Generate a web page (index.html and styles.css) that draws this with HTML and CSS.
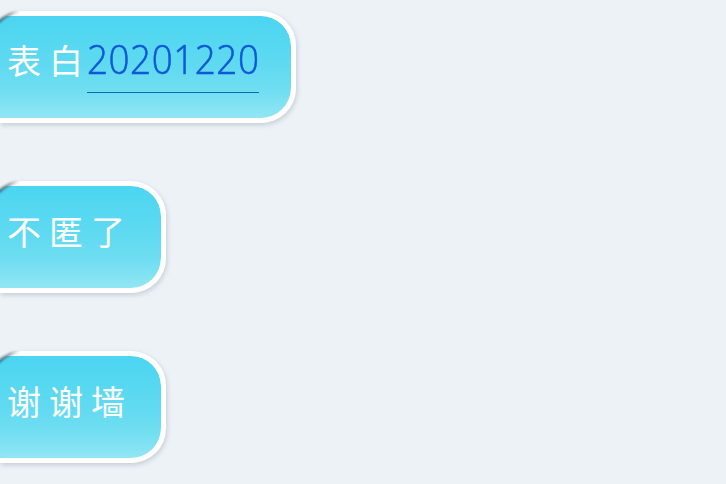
FILE: index.html
```html
<!DOCTYPE html>
<html lang="zh-CN">
<head>
<meta charset="utf-8">
<title>表白墙</title>
<link rel="stylesheet" href="styles.css">
</head>
<body>
<svg class="defs" width="0" height="0" aria-hidden="true">
  <defs>
    <linearGradient id="edge" gradientUnits="userSpaceOnUse" x1="0" y1="0" x2="20" y2="0">
      <stop offset="0" stop-color="#34535e" stop-opacity=".8"/>
      <stop offset=".5" stop-color="#6b7b82" stop-opacity=".7"/>
      <stop offset="1" stop-color="#98a4aa" stop-opacity="0"/>
    </linearGradient>
    <filter id="soft" x="-30%" y="-50%" width="160%" height="200%"><feGaussianBlur stdDeviation="1"/></filter>
    <symbol id="corner" viewBox="0 0 26 24">
      <path d="M0 0H20V3.5C12 4 5 8 0 13Z" fill="#edf2f7"/>
      <path d="M-2 14.5C4 8.5 10 4.5 21 3.5" fill="none" stroke="url(#edge)" stroke-width="2.8" filter="url(#soft)"/>
    </symbol>
  </defs>
</svg>
<main class="chat">
  <div class="bubble wide"><svg class="corner"><use href="#corner"/></svg><span class="text first">表白</span><a class="number"><span class="digits">20201220</span></a></div>
  <div class="bubble"><svg class="corner"><use href="#corner"/></svg><span class="text lower">不匿了</span></div>
  <div class="bubble"><svg class="corner"><use href="#corner"/></svg><span class="text lower">谢谢墙</span></div>
</main>
</body>
</html>
```
FILE: styles.css
```css
* { box-sizing: border-box; }
body {
  margin: 0;
  width: 726px;
  height: 484px;
  overflow: hidden;
  background: #edf2f7;
}
.defs { position: absolute; }
.chat {
  display: flex;
  flex-direction: column;
  gap: 58px;
  padding-top: 11px;
}
.bubble {
  position: relative;
  display: flex;
  align-items: flex-start;
  width: 166px;
  height: 112px;
  padding: 17px 0 0 7px;
  border: 5px solid #fff;
  border-left: 0;
  border-radius: 0 35px 35px 0;
  background: linear-gradient(#4bd5f1, #60daf1 50%, #72def1 75%, #92e6f3) padding-box;
  box-shadow: 1px 2px 5px rgba(80, 95, 110, .26);
}
.wide { width: 296px; }
.corner {
  position: absolute;
  left: 0;
  top: -8px;
  width: 26px;
  height: 24px;
}
.text {
  font: 400 34px/52px "Noto Sans CJK SC", sans-serif;
  letter-spacing: 8px;
  color: #fff;
  white-space: nowrap;
}
.first { width: 80px; padding-top: 1px; }
.lower { padding-top: 2px; }
.number {
  height: 60px;
  width: 172px;
  border-bottom: 1px solid #086bbd;
  color: #1058d6;
}
.digits {
  display: inline-block;
  font: 300 40px/52px "Open Sans", sans-serif;
  letter-spacing: .6px;
  transform: scaleX(.92);
  transform-origin: 0 50%;
  -webkit-text-stroke: .6px #1058d6;
}
```
